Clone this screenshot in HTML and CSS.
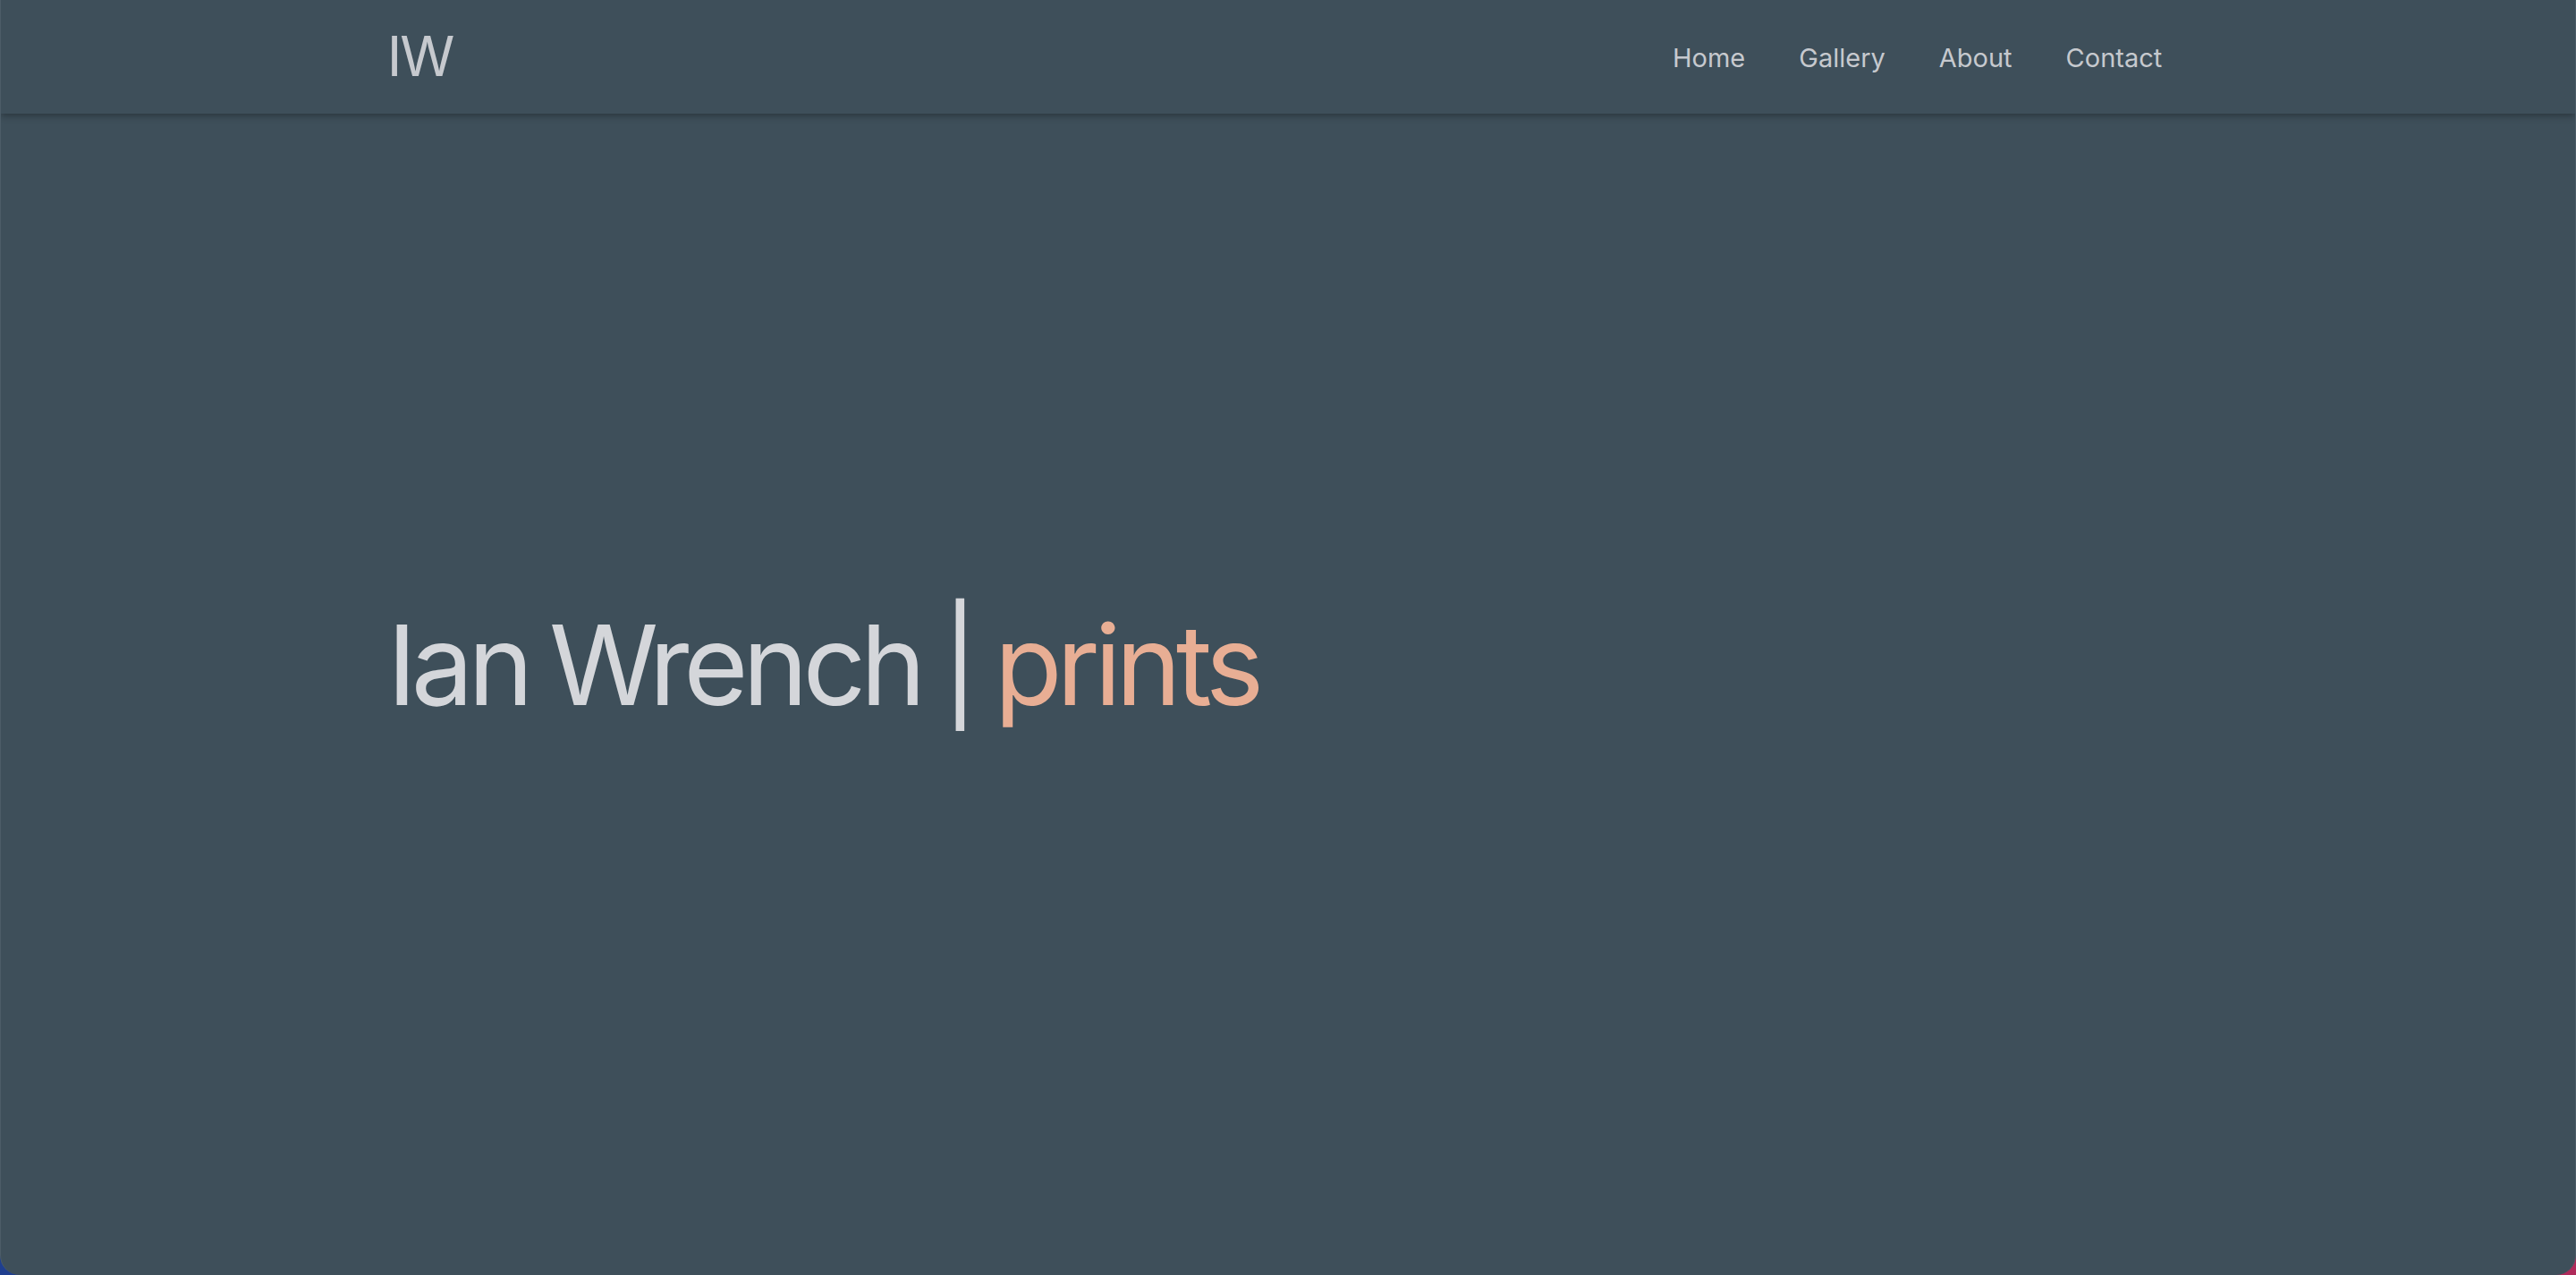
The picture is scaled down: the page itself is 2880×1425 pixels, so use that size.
FILE: index.html
```html
<!DOCTYPE html>
<html lang="en">
<head>
    <meta charset="UTF-8">
    <meta name="viewport" content="width=device-width, initial-scale=1.0">
    <title>Ian Wrench | prints</title>
    <link rel="stylesheet" href="styles.css">
</head>
<body>
    <div class="window">
        <header class="site-header">
            <div class="container header-inner">
                <a href="#" class="logo">IW</a>
                <nav class="main-nav">
                    <a href="#">Home</a>
                    <a href="#">Gallery</a>
                    <a href="#">About</a>
                    <a href="#">Contact</a>
                </nav>
            </div>
        </header>

        <main class="hero">
            <div class="container">
                <h1 class="hero-title">Ian Wrench | <span class="accent">prints</span></h1>
            </div>
        </main>
    </div>
</body>
</html>
```

FILE: styles.css
```css
html {
    background: linear-gradient(90deg, #1f3f8f 0%, #6a3a7a 60%, #b02a5a 100%);
}

body {
    margin: 0;
    font-family: Inter, "Liberation Sans", Arial, sans-serif;
    color: #d4d6da;
}

.window {
    display: flex;
    flex-direction: column;
    height: 100vh;
    background-color: #3e4f5a;
    border-radius: 0 0 22px 22px;
    border-left: 1px solid #4c5c67;
    border-right: 1px solid #4c5c67;
    box-sizing: border-box;
    overflow: hidden;
}

.container {
    width: 70%;
    margin: 0 auto;
}

/* header */
.site-header {
    height: 127px;
    flex-shrink: 0;
    background-color: #3e4f5a;
    box-shadow: 0 2px 8px rgba(0, 0, 0, 0.35);
    position: relative;
    z-index: 1;
}

.header-inner {
    height: 100%;
    display: flex;
    justify-content: space-between;
    align-items: center;
}

.logo {
    font-size: 62px;
    color: #c6c9ce;
    text-decoration: none;
    letter-spacing: -2px;
    margin-top: -2px;
}

.main-nav {
    display: flex;
    margin-top: 2px;
}

.main-nav a {
    font-size: 29px;
    color: #c6c9ce;
    text-decoration: none;
    padding: 0 30px;
}

/* hero */
.hero {
    flex: 1;
    display: flex;
    align-items: center;
    padding-bottom: 67px;
}

.hero-title {
    margin: 0;
    font-size: 124px;
    font-weight: normal;
    letter-spacing: -0.05em;
    word-spacing: -0.04em;
    color: #d4d6da;
}

.accent {
    color: #e8ae94;
}
```
